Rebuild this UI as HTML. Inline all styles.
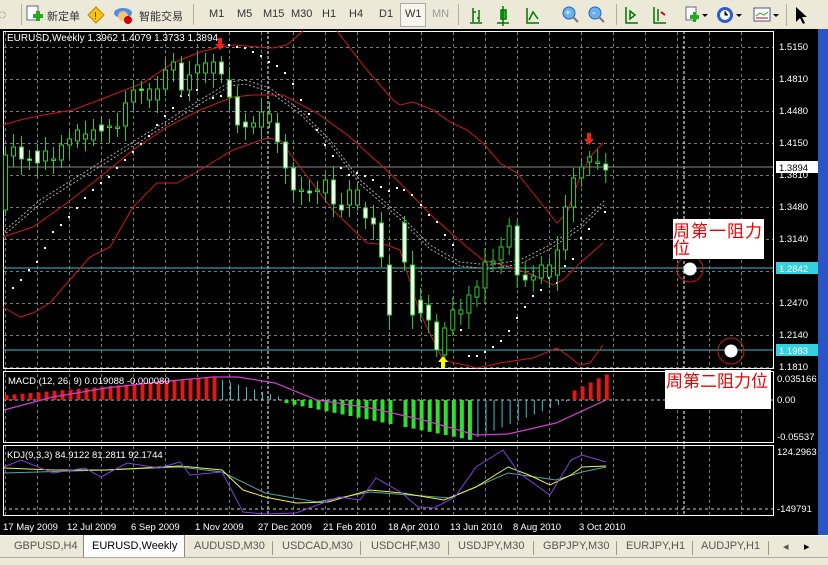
<!DOCTYPE html>
<html><head><meta charset="utf-8">
<style>
body{margin:0;width:828px;height:565px;overflow:hidden;background:#000;font-family:"Liberation Sans","Noto Sans CJK SC",sans-serif;position:relative}
#tb{position:absolute;left:0;top:0;width:828px;height:29px;background:#ece9d8;font-size:11px;color:#333}
#tb span{position:absolute;top:8px}
.sep{position:absolute;top:4px;width:1px;height:21px;background:#b0ad9e}
#tabs{position:absolute;left:0;top:535px;width:828px;height:30px;background:#ece9d8;font-size:11px;color:#555}
#tabs span{position:absolute;top:5px}
.tsep{position:absolute;top:6px;width:1px;height:14px;background:#999}
</style></head><body>
<div id="tb">
<span style="left:-2px;top:6px;font-size:14px;color:#456">◌</span>
<div class="sep" style="left:21px"></div>
<svg style="position:absolute;left:24px;top:5px" width="20" height="20"><rect x="3" y="1" width="11" height="14" fill="#fff" stroke="#667"/><rect x="9" y="9" width="10" height="4" fill="#2a2"/><rect x="12" y="6" width="4" height="10" fill="#2a2"/></svg>
<span style="left:47px">新定单</span>
<svg style="position:absolute;left:87px;top:6px" width="18" height="18"><path d="M9 1L17 9L9 17L1 9Z" fill="#f5c518" stroke="#b8860b"/><text x="7" y="13" font-size="10" fill="#a00" font-family="Liberation Sans">!</text></svg>
<svg style="position:absolute;left:113px;top:4px" width="22" height="22"><ellipse cx="10" cy="9" rx="9" ry="5" fill="#4a90e2"/><circle cx="10" cy="12" r="5" fill="#f4c27a"/><circle cx="15" cy="16" r="4" fill="#c00"/></svg>
<span style="left:139px">智能交易</span>
<div class="sep" style="left:193px"></div>
<span style="left:209px">M1</span><span style="left:237px">M5</span><span style="left:263px">M15</span><span style="left:291px">M30</span><span style="left:322px">H1</span><span style="left:349px">H4</span><span style="left:379px">D1</span>
<div style="position:absolute;left:400px;top:3px;width:24px;height:22px;border:1px solid #aaa;background:#f6f5ee"></div>
<span style="left:405px">W1</span><span style="left:432px;color:#999">MN</span>
<div class="sep" style="left:458px"></div>
<svg style="position:absolute;left:465px;top:4px" width="160" height="22"><g stroke="#070" stroke-width="1.5" fill="none"><path d="M8 4v14M8 8h3M14 6v12M12 14h2M5 19h12"/><rect x="36" y="6" width="5" height="9" fill="#2c2"/><path d="M38 2v20M32 19h12"/><path d="M62 4v15h12M64 16l4-8l5 7"/></g><circle cx="104" cy="9" r="6" fill="#6ab0f0" stroke="#26a"/><path d="M108 13l5 5" stroke="#777" stroke-width="2"/><circle cx="130" cy="9" r="6" fill="#6ab0f0" stroke="#26a"/><path d="M134 13l5 5" stroke="#777" stroke-width="2"/><text x="100" y="12" font-size="10" fill="#fff">+</text><text x="127" y="12" font-size="10" fill="#fff">-</text></svg>
<div class="sep" style="left:616px"></div>
<svg style="position:absolute;left:620px;top:4px" width="210" height="22"><g stroke="#070" stroke-width="1.5" fill="none"><path d="M6 3v16h12M10 7l5 4l-5 4z"/><path d="M34 3v16h12M38 5v12"/></g><path d="M41 8l4 3" stroke="#c00" stroke-width="2"/>
<rect x="66" y="3" width="10" height="13" fill="#fff" stroke="#667"/><rect x="70" y="11" width="9" height="4" fill="#2a2"/><rect x="73" y="8" width="3" height="10" fill="#2a2"/><path d="M82 10l3 3l3-3z" fill="#000"/>
<circle cx="105" cy="11" r="8" fill="#2a5bd7"/><circle cx="105" cy="11" r="5" fill="#fff"/><path d="M105 7v4h3" stroke="#000"/><path d="M116 10l3 3l3-3z" fill="#000"/>
<rect x="134" y="4" width="16" height="13" fill="#fff" stroke="#557"/><path d="M136 12l4-3l4 2l4-3" stroke="#2a2" fill="none"/><path d="M136 14h12" stroke="#c00"/><path d="M153 10l3 3l3-3z" fill="#000"/>
<rect x="166" y="0" width="1" height="22" fill="#b0ad9e"/><path d="M176 3v15l4-4l3 6l2-1l-3-6h5z" fill="#000"/></svg>
</div>

<svg style="position:absolute;left:0;top:29px" width="828" height="506" viewBox="0 29 828 506" font-family="Liberation Sans" font-size="10">
<rect x="0" y="29" width="828" height="506" fill="#000"/>
<rect x="818" y="29" width="10" height="506" fill="#2a55c8"/>
<g id="grid" stroke="#7a7a7a" stroke-dasharray="3,3" stroke-width="1"></g>
<line x1="268" y1="31" x2="268" y2="515" stroke="#fff" stroke-dasharray="3,2"/>
<line x1="684" y1="31" x2="684" y2="515" stroke="#fff" stroke-dasharray="3,2"/>
<rect x="3.5" y="31.5" width="770" height="337" fill="none" stroke="#fff"/>
<rect x="3.5" y="371.5" width="770" height="71" fill="none" stroke="#fff"/>
<rect x="3.5" y="445.5" width="770" height="70" fill="none" stroke="#fff"/>
<line x1="3" y1="167" x2="773" y2="167" stroke="#888"/>
<line x1="3" y1="268" x2="773" y2="268" stroke="#33c0cc"/>
<line x1="3" y1="350" x2="773" y2="350" stroke="#33c0cc"/>
<g fill="none" stroke="#d01818" stroke-width="1">
<polyline points="3,125 20,120 43,115 73,110 107,97 143,83 173,63 200,52 220,47 233,45 273,48 287,45 303,31"/>
<polyline points="337,31 367,70 393,100 400,105 413,102 433,110 450,122 467,130 483,143 500,163 517,173 533,193 557,223 567,213 580,177 590,157 603,143"/>
<polyline points="3,237 33,227 67,203 100,177 133,150 167,127 200,110 233,97 253,95 283,95 317,113 350,137 383,167 400,183 433,217 467,247 483,260 510,267 533,275 553,285 563,280 580,263 603,243"/>
<polyline points="3,307 20,317 33,313 50,303 67,283 90,257 110,247 133,207 157,183 177,183 200,170 233,150 267,138 280,140 300,167 333,210 367,243 387,245 400,250 420,313 443,360 477,368 500,363 533,358 557,348 567,355 580,365 590,363 603,345"/>
</g>
<g fill="none" stroke="#aaa" stroke-dasharray="2,2">
<polyline points="3,232 40,200 80,175 120,150 160,125 200,100 230,82 245,80 270,88 300,110 330,140 360,180 400,215 430,245 460,262 490,265 520,260 550,245 580,225 605,200"/>
<polyline points="3,236 40,204 80,179 120,154 160,129 200,104 230,86 245,84 270,92 300,114 330,144 360,184 400,219 430,249 460,266 490,269 520,264 550,249 580,229 605,204"/>
</g>
<g id="sar" fill="#fff"></g>
<g id="candles"></g>
<path d="M218 38h4v6h3l-5 6l-5-6h3z" fill="#e21"/>
<path d="M587 133h4v6h3l-5 6l-5-6h3z" fill="#e21"/>
<path d="M441 368h4v-6h3l-5-6l-5 6h3z" fill="#ff0"/>
<text x="7" y="41" fill="#fff" font-size="10">EURUSD,Weekly  1.3962 1.4079 1.3733 1.3894</text>
<g fill="#fff" font-size="9.5">
<text x="779" y="50">1.5150</text><text x="779" y="82">1.4810</text><text x="779" y="114">1.4480</text><text x="779" y="146">1.4150</text><text x="779" y="178">1.3810</text><text x="779" y="210">1.3480</text><text x="779" y="242">1.3140</text><text x="779" y="306">1.2470</text><text x="779" y="338">1.2140</text><text x="779" y="370">1.1810</text>
</g>
<rect x="776" y="161" width="42" height="12" fill="#fff"/><text x="779" y="171" font-size="9.5" fill="#000">1.3894</text>
<rect x="776" y="262" width="42" height="12" fill="#33d0dd"/><text x="779" y="272" font-size="9.5" fill="#fff">1.2842</text>
<rect x="776" y="344" width="42" height="12" fill="#33d0dd"/><text x="779" y="354" font-size="9.5" fill="#fff">1.1983</text>
<line x1="3" y1="400" x2="773" y2="400" stroke="#ccc" stroke-dasharray="3,3"/>
<g id="macd"></g>
<polyline fill="none" stroke="#d040d0" stroke-width="1.2" points="4,410 53,397 106,388 159,382 212,377 238,377 275,383 317,400 370,408 423,420 476,435 508,434 556,423 606,400"/>
<text x="8" y="384" fill="#fff" font-size="9.5">MACD (12, 26, 9)  0.019088 -0.000080</text>
<g fill="#fff" font-size="9.5"><text x="777" y="382">0.035166</text><text x="777" y="403">0.00</text><text x="777" y="440">-0.05537</text></g>
<line x1="3" y1="509" x2="773" y2="509" stroke="#ccc" stroke-dasharray="3,3"/>
<g fill="none" stroke-width="1">
<polyline stroke="#4aa8a8" points="4,473 106,470 180,467 222,472 265,493 317,502 370,492 450,498 508,473 556,480 582,472 606,467"/>
<polyline stroke="#f0f040" points="4,468 53,470 106,470 180,466 222,470 243,490 265,497 296,503 328,502 370,490 402,493 444,500 476,487 508,467 529,475 550,485 571,475 582,467 606,466"/>
<polyline stroke="#8040e0" points="4,467 21,460 53,473 85,468 101,477 127,463 159,468 180,462 190,475 222,472 243,512 265,514 296,513 339,497 360,500 376,478 402,493 418,507 434,508 455,497 476,467 503,450 519,473 550,495 571,460 582,455 606,462"/>
</g>
<text x="7" y="458" fill="#fff" font-size="9.5">KDJ(9,3,3) 84.9122 81.2811 92.1744</text>
<g fill="#fff" font-size="9.5"><text x="777" y="455">124.2963</text><text x="777" y="512">-149791</text></g>
<g fill="#fff" font-size="9.5">
<text x="3" y="530">17 May 2009</text><text x="67" y="530">12 Jul 2009</text><text x="131" y="530">6 Sep 2009</text><text x="195" y="530">1 Nov 2009</text><text x="258" y="530">27 Dec 2009</text><text x="323" y="530">21 Feb 2010</text><text x="388" y="530">18 Apr 2010</text><text x="450" y="530">13 Jun 2010</text><text x="513" y="530">8 Aug 2010</text><text x="579" y="530">3 Oct 2010</text>
</g>
<circle cx="690" cy="269" r="13" fill="none" stroke="#d01818"/><circle cx="690" cy="269" r="6.5" fill="#fff"/>
<circle cx="731" cy="351" r="13" fill="none" stroke="#d01818"/><circle cx="731" cy="351" r="6.5" fill="#fff"/>
<rect x="673" y="219" width="91" height="40" fill="#fff"/>
<text x="673" y="237" fill="#e00" font-size="17" font-family="Noto Sans CJK SC" letter-spacing="1">周第一阻力</text>
<text x="673" y="254" fill="#e00" font-size="17" font-family="Noto Sans CJK SC">位</text>
<rect x="665" y="370" width="106" height="39" fill="#fff"/>
<text x="666" y="387" fill="#e00" font-size="17" font-family="Noto Sans CJK SC">周第二阻力位</text>
</svg>

<div id="tabs">
<div style="position:absolute;left:0;top:0;width:828px;height:1px;background:#fff"></div>
<span style="left:14px">GBPUSD,H4</span>
<div style="position:absolute;left:83px;top:0;width:100px;height:22px;background:#fff;border:1px solid #888;border-top:none"></div>
<span style="left:92px;color:#000">EURUSD,Weekly</span>
<span style="left:194px">AUDUSD,M30</span><div class="tsep" style="left:272px"></div>
<span style="left:282px">USDCAD,M30</span><div class="tsep" style="left:360px"></div>
<span style="left:371px">USDCHF,M30</span><div class="tsep" style="left:448px"></div>
<span style="left:458px">USDJPY,M30</span><div class="tsep" style="left:533px"></div>
<span style="left:543px">GBPJPY,M30</span><div class="tsep" style="left:616px"></div>
<span style="left:626px">EURJPY,H1</span><div class="tsep" style="left:692px"></div>
<span style="left:701px">AUDJPY,H1</span><div class="tsep" style="left:768px"></div>
<span style="left:783px">◂</span><span style="left:804px;color:#000">▸</span>
<div style="position:absolute;left:0;top:22px;width:828px;height:1px;background:#aaa"></div>
</div>

<script>
var NS="http://www.w3.org/2000/svg";
function el(p,t,a){var e=document.createElementNS(NS,t);for(var k in a)e.setAttribute(k,a[k]);p.appendChild(e);return e;}
var g=document.getElementById('grid');
for(var x=5;x<773;x+=32)el(g,'line',{x1:x+.5,y1:32,x2:x+.5,y2:515});
for(var y=47;y<369;y+=32)el(g,'line',{x1:4,y1:y+.5,x2:773,y2:y+.5});
var C=[[210,155],[156,147],[147,159],[159,160],[151,163],[161,151],[160,159],[160,145],[145,139],[141,130],[139,134],[140,130],[125,131],[127,126],[127,127],[126,103],[102,90],[89,90],[100,89],[100,89],[89,70],[70,62],[63,90],[90,75],[73,65],[73,63],[73,62],[62,74],[80,97],[97,125],[122,127],[127,123],[127,112],[122,114],[123,142],[142,168],[168,190],[190,190],[191,193],[190,190],[193,180],[180,204],[205,210],[205,190],[205,190],[208,218],[218,224],[223,257],[265,315],[223,262],[265,315],[300,313],[305,320],[322,350],[355,328],[330,310],[314,310],[313,295],[297,287],[288,262],[263,261],[260,247],[247,226],[226,275],[275,280],[280,276],[278,265],[277,265],[275,250],[250,207],[207,178],[178,167],[162,157],[162,162],[164,170]];
var cg=document.getElementById('candles');
for(var i=0;i<C.length;i++){var xx=5+i*8;if(i>=49)xx=404+(i-49)*8.05;var o=C[i][0],c=C[i][1];var t=Math.min(o,c),b=Math.max(o,c);var w1=6+(i*7%9),w2=6+(i*5%11);
el(cg,'line',{x1:xx+.5,y1:t-w1,x2:xx+.5,y2:b+w2,stroke:'#2ecc2e'});
var bear=c>o;el(cg,'rect',{x:xx-1.5,y:t,width:4,height:Math.max(b-t,1.5),fill:bear?'#fff':'#000',stroke:'#2ecc2e'});}
var s=document.getElementById('sar');
var S=[[13,288],[21,280],[29,270],[37,262],[45,248],[53,232],[61,225],[69,217],[77,208],[85,198],[93,190],[101,183],[109,177],[117,168],[125,160],[133,152],[141,144],[149,136],[157,125],[165,116],[173,108],[181,96],[189,95],[197,90],[213,98],[221,96],[229,45],[237,47],[245,48],[253,52],[261,56],[269,62],[277,66],[285,73],[293,84],[301,100],[309,114],[317,130],[325,145],[333,156],[341,168],[349,175],[357,173],[365,176],[373,180],[381,187],[389,191],[397,188],[404,190],[412,195],[421,205],[429,215],[437,222],[445,235],[453,245],[461,330],[469,356],[477,356],[485,352],[493,347],[501,341],[509,331],[517,318],[525,307],[533,296],[541,290],[549,278],[557,283],[565,266],[573,259],[581,238],[589,229],[605,212]];
S.forEach(function(p){el(s,'rect',{x:p[0]-1,y:p[1]-1,width:2,height:2});});
var m=document.getElementById('macd');
for(var i=0;i<C.length;i++){var xx=(i>=49?404+(i-49)*8.05:5+i*8)+1;var h,col;
if(xx<=215){h=-(5+(xx-7)/208*18);col='#e01818';}
else if(xx<=285){h=-(22*(1-(xx-215)/75));col='#40c0d0';}
else if(xx<=470){h=(4+(xx-290)/180*36);col='#30e030';}
else if(xx<=570){h=40*(1-(xx-470)/100);col='#40c0d0';}
else {h=-(10+(xx-575)/30*15);col='#e01818';}
var w=(col=='#40c0d0')?1:4;
el(m,'rect',{x:xx-(w>1?1.5:0),y:h<0?400+h:400,width:w,height:Math.abs(h),fill:col});}
</script>
</body></html>
